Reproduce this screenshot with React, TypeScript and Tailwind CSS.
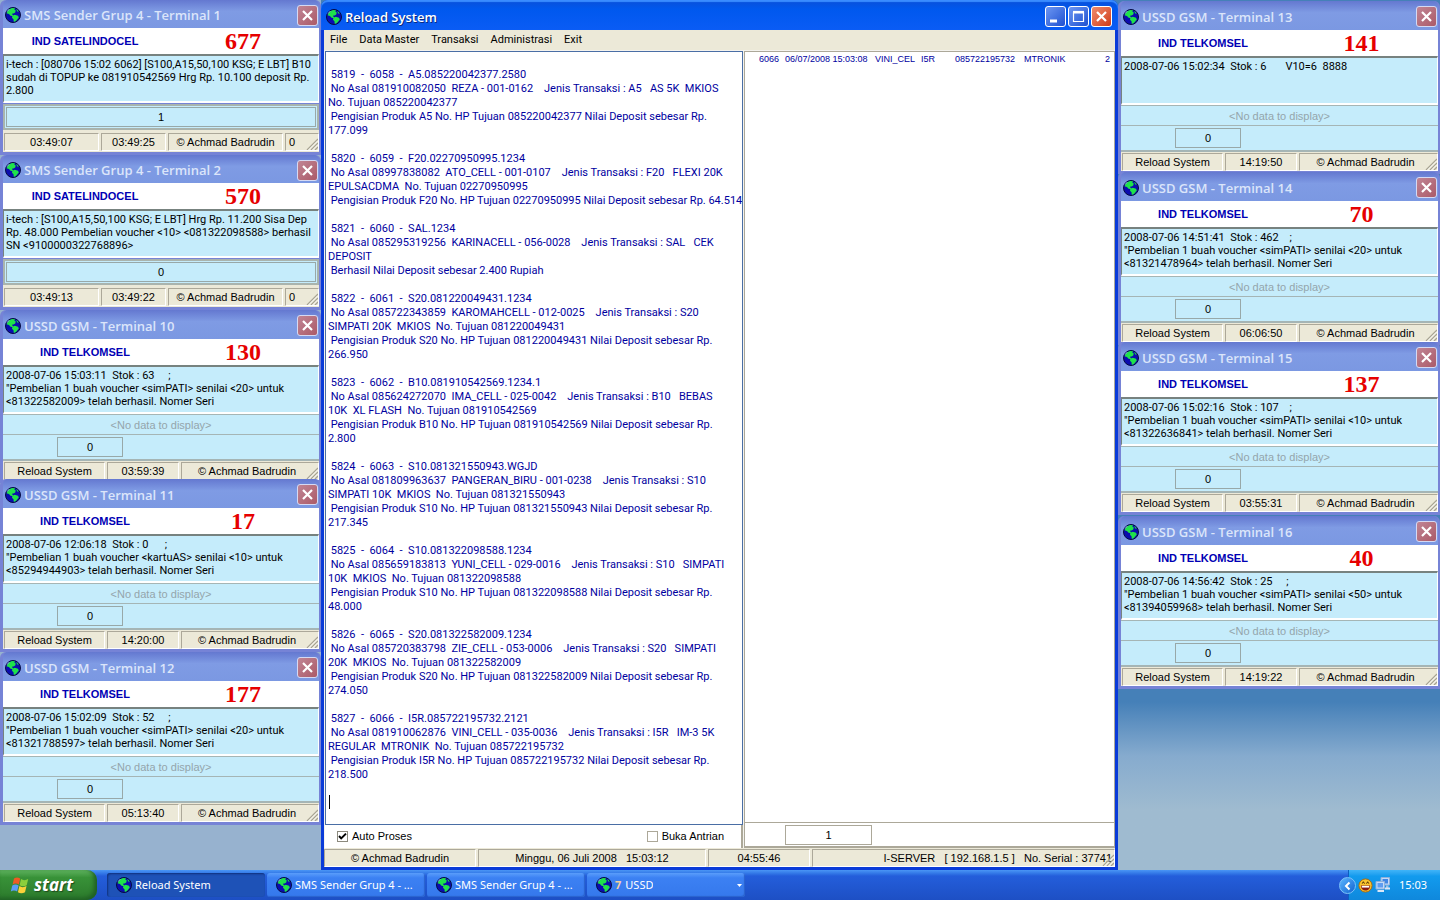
import { Fragment, type ReactNode } from 'react';
import clsx from 'clsx';

type Terminal = {
  title: string;
  kind: 'sms' | 'ussd';
  provider: string;
  count: string;
  message: string;
  queue: string;
  status: string[];
  className?: string;
};

const AUTHOR = '© Achmad Badrudin';

const leftTerminals: Terminal[] = [
  {
    title: 'SMS Sender Grup 4 - Terminal 1',
    kind: 'sms',
    provider: 'IND SATELINDOCEL',
    count: '677',
    message:
      'i-tech : [080706 15:02 6062] [S100,A15,50,100 KSG; E LBT] B10\nsudah di TOPUP ke 081910542569 Hrg Rp. 10.100 deposit Rp.\n2.800',
    queue: '1',
    status: ['03:49:07', '03:49:25', AUTHOR, '0'],
  },
  {
    title: 'SMS Sender Grup 4 - Terminal 2',
    kind: 'sms',
    provider: 'IND SATELINDOCEL',
    count: '570',
    message:
      'i-tech : [S100,A15,50,100 KSG; E LBT] Hrg Rp. 11.200 Sisa Dep\nRp. 48.000 Pembelian voucher <10> <081322098588> berhasil\nSN <9100000322768896>',
    queue: '0',
    status: ['03:49:13', '03:49:22', AUTHOR, '0'],
  },
  {
    title: 'USSD GSM - Terminal 10',
    kind: 'ussd',
    provider: 'IND TELKOMSEL',
    count: '130',
    message:
      '2008-07-06 15:03:11  Stok : 63     ;\n"Pembelian 1 buah voucher <simPATI> senilai <20> untuk\n<81322582009> telah berhasil. Nomer Seri',
    queue: '0',
    status: ['Reload System', '03:59:39', AUTHOR],
  },
  {
    title: 'USSD GSM - Terminal 11',
    kind: 'ussd',
    provider: 'IND TELKOMSEL',
    count: '17',
    message:
      '2008-07-06 12:06:18  Stok : 0      ;\n"Pembelian 1 buah voucher <kartuAS> senilai <10> untuk\n<85294944903> telah berhasil. Nomer Seri',
    queue: '0',
    status: ['Reload System', '14:20:00', AUTHOR],
    className: '-mt-1',
  },
  {
    title: 'USSD GSM - Terminal 12',
    kind: 'ussd',
    provider: 'IND TELKOMSEL',
    count: '177',
    message:
      '2008-07-06 15:02:09  Stok : 52     ;\n"Pembelian 1 buah voucher <simPATI> senilai <20> untuk\n<81321788597> telah berhasil. Nomer Seri',
    queue: '0',
    status: ['Reload System', '05:13:40', AUTHOR],
  },
];

const rightTerminals: Terminal[] = [
  {
    title: 'USSD GSM - Terminal 13',
    kind: 'ussd',
    provider: 'IND TELKOMSEL',
    count: '141',
    message: '2008-07-06 15:02:34  Stok : 6       V10=6  8888',
    queue: '0',
    status: ['Reload System', '14:19:50', AUTHOR],
    className: 'mt-px',
  },
  {
    title: 'USSD GSM - Terminal 14',
    kind: 'ussd',
    provider: 'IND TELKOMSEL',
    count: '70',
    message:
      '2008-07-06 14:51:41  Stok : 462    ;\n"Pembelian 1 buah voucher <simPATI> senilai <20> untuk\n<81321478964> telah berhasil. Nomer Seri',
    queue: '0',
    status: ['Reload System', '06:06:50', AUTHOR],
    className: '-mt-[2px]',
  },
  {
    title: 'USSD GSM - Terminal 15',
    kind: 'ussd',
    provider: 'IND TELKOMSEL',
    count: '137',
    message:
      '2008-07-06 15:02:16  Stok : 107    ;\n"Pembelian 1 buah voucher <simPATI> senilai <10> untuk\n<81322636841> telah berhasil. Nomer Seri',
    queue: '0',
    status: ['Reload System', '03:55:31', AUTHOR],
    className: '-mt-[3px]',
  },
  {
    title: 'USSD GSM - Terminal 16',
    kind: 'ussd',
    provider: 'IND TELKOMSEL',
    count: '40',
    message:
      '2008-07-06 14:56:42  Stok : 25     ;\n"Pembelian 1 buah voucher <simPATI> senilai <50> untuk\n<81394059968> telah berhasil. Nomer Seri',
    queue: '0',
    status: ['Reload System', '14:19:22', AUTHOR],
    className: 'mt-px',
  },
];

const logLines = [
  '',
  ' 5819  -  6058  -  A5.085220042377.2580',
  ' No Asal 081910082050  REZA - 001-0162    Jenis Transaksi : A5   AS 5K  MKIOS',
  'No. Tujuan 085220042377',
  ' Pengisian Produk A5 No. HP Tujuan 085220042377 Nilai Deposit sebesar Rp.',
  '177.099',
  '',
  ' 5820  -  6059  -  F20.02270950995.1234',
  ' No Asal 08997838082  ATO_CELL - 001-0107    Jenis Transaksi : F20   FLEXI 20K',
  'EPULSACDMA  No. Tujuan 02270950995',
  ' Pengisian Produk F20 No. HP Tujuan 02270950995 Nilai Deposit sebesar Rp. 64.514',
  '',
  ' 5821  -  6060  -  SAL.1234',
  ' No Asal 085295319256  KARINACELL - 056-0028    Jenis Transaksi : SAL   CEK',
  'DEPOSIT',
  ' Berhasil Nilai Deposit sebesar 2.400 Rupiah',
  '',
  ' 5822  -  6061  -  S20.081220049431.1234',
  ' No Asal 085722343859  KAROMAHCELL - 012-0025    Jenis Transaksi : S20',
  'SIMPATI 20K  MKIOS  No. Tujuan 081220049431',
  ' Pengisian Produk S20 No. HP Tujuan 081220049431 Nilai Deposit sebesar Rp.',
  '266.950',
  '',
  ' 5823  -  6062  -  B10.081910542569.1234.1',
  ' No Asal 085624272070  IMA_CELL - 025-0042    Jenis Transaksi : B10   BEBAS',
  '10K  XL FLASH  No. Tujuan 081910542569',
  ' Pengisian Produk B10 No. HP Tujuan 081910542569 Nilai Deposit sebesar Rp.',
  '2.800',
  '',
  ' 5824  -  6063  -  S10.081321550943.WGJD',
  ' No Asal 081809963637  PANGERAN_BIRU - 001-0238    Jenis Transaksi : S10',
  'SIMPATI 10K  MKIOS  No. Tujuan 081321550943',
  ' Pengisian Produk S10 No. HP Tujuan 081321550943 Nilai Deposit sebesar Rp.',
  '217.345',
  '',
  ' 5825  -  6064  -  S10.081322098588.1234',
  ' No Asal 085659183813  YUNI_CELL - 029-0016    Jenis Transaksi : S10   SIMPATI',
  '10K  MKIOS  No. Tujuan 081322098588',
  ' Pengisian Produk S10 No. HP Tujuan 081322098588 Nilai Deposit sebesar Rp.',
  '48.000',
  '',
  ' 5826  -  6065  -  S20.081322582009.1234',
  ' No Asal 085720383798  ZIE_CELL - 053-0006    Jenis Transaksi : S20   SIMPATI',
  '20K  MKIOS  No. Tujuan 081322582009',
  ' Pengisian Produk S20 No. HP Tujuan 081322582009 Nilai Deposit sebesar Rp.',
  '274.050',
  '',
  ' 5827  -  6066  -  I5R.085722195732.2121',
  ' No Asal 081910062876  VINI_CELL - 035-0036    Jenis Transaksi : I5R   IM-3 5K',
  'REGULAR  MTRONIK  No. Tujuan 085722195732',
  ' Pengisian Produk I5R No. HP Tujuan 085722195732 Nilai Deposit sebesar Rp.',
  '218.500',
  '',
  '',
];

const LOG_LINE_HEIGHT = 14;

function Globe() {
  return (
    <svg viewBox="0 0 16 16" className="size-4 shrink-0" aria-hidden="true">
      <circle cx="8" cy="8" r="7.5" fill="#0c0cae" stroke="#050c40" strokeWidth="1" />
      <path d="M2.400 4.400 4.200 2.200 7 1 10 1.200 9.400 2.800 10.800 3.600 10.200 5.600 8.600 6.400 7.400 6.600 7.200 7.600 8.400 8.400 7.400 9.200 5.200 8.400 4 7 3 6.800 1.600 6.200Z" fill="#1fe24a" />
      <path d="M11.200 1.800 13 3.400 13.600 4.800 12.200 4.400Z" fill="#1fe24a" />
      <path d="M7.400 8.800 9.800 7.800 13 8.800 13.800 10.400 12.400 12.200 11.400 13.400 9.800 14.800 8.600 14.400 8.600 12.400 7 10.800Z" fill="#1fe24a" />
      <path d="M2 4.600 4.200 2.200" stroke="#b4ccff" strokeWidth="0.8" />
    </svg>
  );
}

function Grip() {
  return (
    <svg viewBox="0 0 12 12" className="absolute right-0 bottom-0 size-3" aria-hidden="true">
      <path d="M1 12 12 1M5 12 12 5M9 12 12 9" stroke="#a8a493" strokeWidth="1.3" />
      <path d="M2.5 12 12 2.5M6.5 12 12 6.5" stroke="#fff" strokeWidth="0.8" />
    </svg>
  );
}

function CaptionButton({
  label,
  className,
  children,
}: {
  label: string;
  className: string;
  children: ReactNode;
}) {
  return (
    <button
      type="button"
      aria-label={label}
      className={clsx('flex size-[21px] items-center justify-center rounded-[3px] border', className)}
    >
      <svg viewBox="0 0 19 19" className="size-full" fill="none" stroke="#fff" aria-hidden="true">
        {children}
      </svg>
    </button>
  );
}

function StatusCell({ className, children }: { className?: string; children: ReactNode }) {
  return (
    <div
      className={clsx(
        'relative h-[18px] border-t border-l border-t-[#aca899] border-l-[#aca899] border-r border-b border-r-white border-b-white text-center leading-[17px] whitespace-pre',
        className
      )}
    >
      {children}
    </div>
  );
}

const statusWidths = {
  sms: ['w-[95px]', 'w-[65px]', 'w-[115px]', 'flex-1 pl-[3px] text-left'],
  ussd: ['w-[101px]', 'w-[72px]', 'flex-1 pr-[6px]'],
};

function TerminalWindow({ terminal }: { terminal: Terminal }) {
  const { title, kind, provider, count, message, queue, status, className } = terminal;
  const sms = kind === 'sms';
  return (
    <section
      className={clsx(
        'relative rounded-t-[6px] border-r-2 border-b-[3px] border-l-[3px] border-[#7683d6] bg-[#7683d6]',
        className
      )}
    >
      <header
        className={clsx(
          'flex items-center gap-[3px] rounded-t-[5px] bg-linear-to-b from-[#6478d0] via-[#7f9be4] via-40% to-[#7b98e2] pt-[2px] pr-[1px] pl-[2px]',
          sms ? 'h-7' : 'h-[29px]'
        )}
      >
        <Globe />
        <h2 className="flex-1 truncate font-['Open_Sans',sans-serif] text-[13px] leading-[18px] font-semibold text-[#dbe5fa]">
          {title}
        </h2>
        <CaptionButton label="Close" className="border-[#d5d9f3] bg-linear-to-br from-[#c08595] to-[#ab5a68]">
          <path d="m5 5 9 9M14 5l-9 9" strokeWidth="2.2" />
        </CaptionButton>
      </header>

      <div className="flex h-[26px] items-center bg-white">
        <div className="w-[164px] text-center font-bold text-[#0000b4]">{provider}</div>
        <div className="flex-1 text-center font-['Liberation_Serif',serif] text-[24px] leading-[26px] font-bold text-[#e60000]">
          {count}
        </div>
      </div>

      <textarea
        readOnly
        wrap="off"
        aria-label={`${title} message`}
        value={message}
        className="block h-[49px] w-full resize-none overflow-hidden border-t-2 border-r border-b-2 border-l border-t-[#77827f] border-r-white border-b-white border-l-[#77827f] bg-[#c5ecfb] px-[2px] pt-[2px] font-['Roboto',sans-serif] text-[11px] leading-[13px] text-black outline-none"
      />

      {sms ? (
        <div className="mt-px h-[26px] border-2 border-[#a9b4ae] bg-[#c5ecfb] p-px">
          <div className="h-full border border-[#98a8a8] text-center leading-[19px]">{queue}</div>
        </div>
      ) : (
        <div className="border-t border-b-2 border-[#a5b5b5] bg-[#c5ecfb]">
          <div className="h-5 border-b border-[#a5b5b5] text-center leading-[20px] text-[#94a5ab]">
            {'<No data to display>'}
          </div>
          <div className="h-6 pt-[2px] pl-[54px]">
            <div className="h-5 w-[66px] border border-[#98a8a8] text-center leading-[18px]">{queue}</div>
          </div>
        </div>
      )}

      <footer className={clsx('flex gap-[2px] bg-[#ece9d8] pl-px', sms ? 'pt-[3px] pb-px' : 'pt-px')}>
        {status.map((text, i) => (
          <StatusCell key={i} className={statusWidths[kind][i]}>
            {text}
            {i === status.length - 1 && <Grip />}
          </StatusCell>
        ))}
      </footer>
    </section>
  );
}

function MainWindow() {
  return (
    <main className="flex min-w-0 flex-1 flex-col rounded-t-[7px] border-x-[3px] border-b-[3px] border-[#0a3bd8] bg-[#ece9d8]">
      <header className="-mx-[3px] flex h-[30px] shrink-0 items-center gap-[3px] rounded-t-[7px] bg-linear-to-b from-[#0a4fd8] via-[#0058ee] via-30% to-[#0a5cf5] pt-[3px] pr-[6px] pl-[5px] shadow-[inset_0_2px_1px_#3a8cff]">
        <Globe />
        <h1 className="flex-1 font-['Open_Sans',sans-serif] text-[13px] leading-[18px] font-semibold text-white [text-shadow:1px_1px_0_#0a2a80]">
          Reload System
        </h1>
        <div className="flex gap-[2px]">
          <CaptionButton label="Minimize" className="border-white bg-linear-to-br from-[#6d96f2] to-[#1f4fd0]">
            <path d="M4 14h7" strokeWidth="3" />
          </CaptionButton>
          <CaptionButton label="Maximize" className="border-white bg-linear-to-br from-[#6d96f2] to-[#1f4fd0]">
            <path d="M4.5 5v9.5h10V5" strokeWidth="1.2" />
            <path d="M4 5.2h11" strokeWidth="2.6" />
          </CaptionButton>
          <CaptionButton label="Close" className="border-white bg-linear-to-br from-[#f08a6c] to-[#cf3a12]">
            <path d="m5 5 9 9M14 5l-9 9" strokeWidth="2.2" />
          </CaptionButton>
        </div>
      </header>

      <nav className="flex h-[20px] shrink-0 items-center pb-px font-['Roboto',sans-serif]">
        {['File', 'Data Master', 'Transaksi', 'Administrasi', 'Exit'].map((item) => (
          <button key={item} type="button" className="px-[6px] leading-[18px]">
            {item}
          </button>
        ))}
      </nav>

      <div className="flex min-h-0 flex-1 gap-px bg-[#f4f3ee] pt-px pl-px">
        <div className="flex w-[418px] shrink-0 flex-col">
          <div className="relative flex flex-1">
            <textarea
              readOnly
              wrap="off"
              aria-label="Log transaksi"
              value={logLines.join('\n')}
              className="w-full resize-none overflow-hidden border border-[#4a6ea5] bg-white pt-[2px] pr-0 pl-[2px] font-['Roboto',sans-serif] text-[11px] leading-[14px] text-[#0000a0] outline-none"
            />
            <span
              className="absolute left-1 h-[14px] w-px bg-black"
              style={{ top: (logLines.length - 1) * LOG_LINE_HEIGHT + 2 }}
            />
          </div>
          <div className="flex h-[23px] items-center justify-between border-r-2 border-[#aca899] bg-white pr-[17px] pl-3">
            <label className="flex items-center gap-1">
              <input
                type="checkbox"
                defaultChecked
                className="peer size-[11px] appearance-none border border-[#8c8a7e] bg-white"
              />
              <svg viewBox="0 0 11 11" className="-ml-[15px] hidden size-[11px] peer-checked:block" aria-hidden="true">
                <path d="m2 5 2.2 2.4L9 2.6" fill="none" stroke="#000" strokeWidth="2" />
              </svg>
              Auto Proses
            </label>
            <label className="flex items-center gap-1">
              <input type="checkbox" className="size-[11px] appearance-none border border-[#aca899] bg-white" />
              Buka Antrian
            </label>
          </div>
        </div>

        <div className="flex flex-1 flex-col border-t border-r border-b-2 border-l border-[#aca899] bg-white">
          <div className="flex-1">
            <table className="w-full table-fixed text-[9px] leading-[14px] whitespace-nowrap text-[#0000a0]">
              <tbody>
                <tr>
                  <td className="w-[40px] pl-[14px]">6066</td>
                  <td className="w-[90px]">06/07/2008 15:03:08</td>
                  <td className="w-[46px]">VINI_CEL</td>
                  <td className="w-[34px]">I5R</td>
                  <td className="w-[69px]">085722195732</td>
                  <td>MTRONIK</td>
                  <td className="w-[20px] pr-1 text-right">2</td>
                </tr>
              </tbody>
            </table>
          </div>
          <div className="h-[24px] border-t border-[#aca899] pt-[2px] pl-10">
            <div className="h-5 w-[87px] border border-[#aca899] text-center leading-[18px]">1</div>
          </div>
        </div>
      </div>

      <footer className="flex shrink-0 gap-[2px] pt-px">
        <StatusCell className="w-[152px]">{AUTHOR}</StatusCell>
        <StatusCell className="w-[228px]">Minggu, 06 Juli 2008   15:03:12</StatusCell>
        <StatusCell className="w-[102px]">04:55:46</StatusCell>
        <StatusCell className="flex-1 pr-[2px] text-right">
          {'I-SERVER   [ 192.168.1.5 ]   No. Serial : 37741'}
          <Grip />
        </StatusCell>
      </footer>
    </main>
  );
}

function Taskbar() {
  const tasks: ReactNode[] = [
    'Reload System',
    'SMS Sender Grup 4 - ...',
    'SMS Sender Grup 4 - ...',
    <Fragment key="ussd">
      <b className="mr-1 text-[#f5cf9e]">7</b>USSD
    </Fragment>,
  ];
  return (
    <footer className="flex h-[30px] items-stretch bg-linear-to-b from-[#4a96f5] via-[#245edb] via-20% to-[#1d4fc4] font-['Noto_Sans',sans-serif] text-white">
      <button
        type="button"
        className="mr-[10px] flex w-[97px] items-center gap-1 rounded-r-[10px] bg-linear-to-b from-[#5fb35f] via-[#389238] via-25% to-[#2c7a2c] pl-[10px] shadow-[inset_-3px_-2px_4px_#1f5f24]"
      >
        <svg viewBox="0 0 20 18" className="h-[18px] w-5" aria-hidden="true">
          <path d="M4 2.500c2-1.400 4-1.400 6.200 0L8.900 8.600c-2-1.400-4.200-1.400-6.300 0Z" fill="#ee5a24" />
          <path d="M11 3.100c2 1.400 4.700 1.400 7.200 0L16.700 9.200c-2.400 1.400-4.800 1.400-7.100 0Z" fill="#8ccf3c" />
          <path d="M2.300 9.500c2-1.400 4.200-1.400 6.300 0L7.100 15.600c-2-1.400-4.200-1.400-6.300 0Z" fill="#5b9cf5" />
          <path d="M9.400 10.100c2 1.400 4.700 1.400 7.100 0l-1.500 6.100c-2.400 1.400-4.800 1.400-7.100 0Z" fill="#fbd13a" />
        </svg>
        <span className="font-['Open_Sans',sans-serif] text-[17px] leading-[22px] font-bold italic [text-shadow:1px_1px_1px_#1c4a1c]">
          start
        </span>
      </button>

      <div className="flex flex-1 items-center gap-[2px]">
        {tasks.map((task, i) => (
          <button
            key={i}
            type="button"
            className={clsx(
              'flex h-[24px] w-[158px] items-center gap-[3px] rounded-[3px] pl-[9px]',
              i === 0
                ? 'bg-[#1e52b7] shadow-[inset_1px_1px_2px_#10307a]'
                : 'bg-linear-to-b from-[#5a9dfb] via-[#3c81f3] via-20% to-[#3578ec] shadow-[inset_-1px_-1px_1px_#2a62cc]'
            )}
          >
            <Globe />
            <span className="truncate">{task}</span>
            {i === 3 && (
              <svg viewBox="0 0 5 3" className="mr-[3px] ml-auto h-[3px] w-[5px]" aria-hidden="true">
                <path d="M0 0h5L2.500 3Z" fill="#fff" />
              </svg>
            )}
          </button>
        ))}
      </div>

      <div className="relative flex w-[92px] items-center gap-[2px] border-l border-[#0d5fc0] bg-linear-to-b from-[#3fb4f8] via-[#129bee] via-20% to-[#0f88dc] pr-[13px] pl-[9px]">
        <button
          type="button"
          aria-label="Show hidden icons"
          className="absolute top-[7px] -left-[10px] flex size-[17px] items-center justify-center rounded-full border border-[#7cc4fa] bg-linear-to-br from-[#5cb6ff] to-[#0f62d0]"
        >
          <svg viewBox="0 0 10 10" className="size-[10px]" aria-hidden="true">
            <path d="M6.500 1.500 3 5l3.500 3.500" fill="none" stroke="#fff" strokeWidth="2" />
          </svg>
        </button>
        <svg viewBox="0 0 16 16" className="size-[15px]" aria-hidden="true">
          <circle cx="8" cy="8" r="7" fill="#f9c52e" stroke="#a86a10" />
          <path d="M3 8h10c0 3.400-2.200 5.400-5 5.400S3 11.400 3 8Z" fill="#8c1c10" />
          <path d="M4 8.400h8v1.800H4Z" fill="#fff" />
          <path d="M4.500 6 5.700 4l1.200 2M9.100 6 10.300 4l1.200 2" fill="none" stroke="#402000" />
        </svg>
        <svg viewBox="0 0 16 16" className="size-4" aria-hidden="true">
          <path d="M6 .5h8.500v7.500H6Z" fill="#c3dbf8" stroke="#8fb0dc" />
          <path d="M7.500 2H13v4.500H7.500Z" fill="#3f86e6" />
          <path d="M11 8.500h2.500v2.500H11Z" fill="#9dbce4" />
          <path d="M1 4.500h8.500V12H1Z" fill="#c3dbf8" stroke="#8fb0dc" />
          <path d="M2.500 6H8v4.500H2.500Z" fill="#5f9cf0" />
          <path d="M2.500 14h6.500M10 11.500h5" stroke="#dbe8f8" strokeWidth="2" />
        </svg>
        <span className="ml-auto">15:03</span>
      </div>
    </footer>
  );
}

export default function App() {
  return (
    <div className="flex min-h-screen flex-col bg-linear-to-b from-[#4580b8] from-78% via-[#86abce] via-84% to-[#9fbbd0] to-90% font-['Liberation_Sans',sans-serif] text-[11px] text-black">
      <div className="flex flex-1">
        <aside className="w-[321px] shrink-0 bg-[#97b2cf]">
          {leftTerminals.map((terminal) => (
            <TerminalWindow key={terminal.title} terminal={terminal} />
          ))}
        </aside>
        <MainWindow />
        <aside className="w-[322px] shrink-0">
          {rightTerminals.map((terminal) => (
            <TerminalWindow key={terminal.title} terminal={terminal} />
          ))}
        </aside>
      </div>
      <Taskbar />
    </div>
  );
}
